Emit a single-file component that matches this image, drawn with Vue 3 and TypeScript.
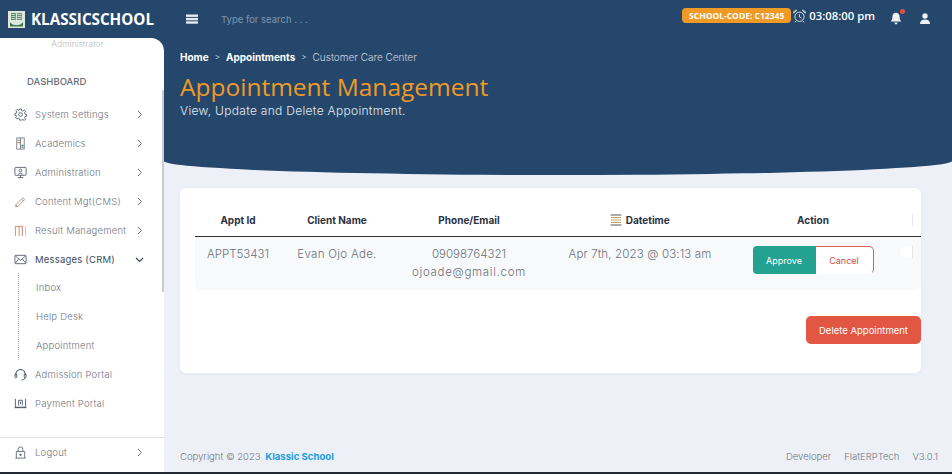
<script setup lang="ts">
interface NavItem { label: string; icon: string; chevron?: 'right' | 'down'; active?: boolean }
const topItems: NavItem[] = [
  { label: 'System Settings', icon: 'gear', chevron: 'right' },
  { label: 'Academics', icon: 'book', chevron: 'right' },
  { label: 'Administration', icon: 'monitor', chevron: 'right' },
  { label: 'Content Mgt(CMS)', icon: 'pen', chevron: 'right' },
  { label: 'Result Management', icon: 'result', chevron: 'right' },
  { label: 'Messages (CRM)', icon: 'mail', chevron: 'down', active: true },
]
const subItems = ['Inbox', 'Help Desk', 'Appointment']
const bottomItems: NavItem[] = [
  { label: 'Admission Portal', icon: 'headset' },
  { label: 'Payment Portal', icon: 'pay' },
]
</script>

<template>
  <div class="page">
    <header class="topbar">
      <div class="brand">
        <svg class="logo" width="17" height="17" viewBox="0 0 17 17">
          <rect width="17" height="17" fill="#dfe8dc" />
          <rect x="3" y="2" width="5" height="7" fill="#5f8a68" />
          <rect x="9" y="2" width="5" height="7" fill="#6c9474" />
          <path d="M3.500 3.500h4M3.500 5.500h4M9.500 3.500h4M9.500 5.500h4M3.500 7.500h4M9.500 7.500h4" stroke="#eef3ec" stroke-width="0.700" />
          <path d="M2 11c2 4 11 4 13 0v4.500H2z" fill="#3c7a4c" />
          <path d="M4 12.500c2 1.500 7 1.500 9 0" stroke="#e8efe5" stroke-width="0.700" fill="none" />
        </svg>
        <span class="brand-name">KLASSICSCHOOL</span>
      </div>
      <svg class="burger" width="12" height="10" viewBox="0 0 12 10">
        <rect y="0.500" width="12" height="2.400" fill="#e8edf3" />
        <rect y="3.900" width="12" height="2.400" fill="#e8edf3" />
        <rect y="7.300" width="12" height="2.400" fill="#e8edf3" />
      </svg>
      <span class="search">Type for search . . .</span>
      <div class="top-right">
        <span class="code">SCHOOL-CODE: C12345</span>
        <svg class="clock" width="13" height="14" viewBox="0 0 13 14" fill="none" stroke="#e8edf3" stroke-width="0.900">
          <circle cx="6.500" cy="7.800" r="4.600" />
          <path d="M6.500 5.300v2.700l1.800 1M.8 4.200a2.300 2.300 0 0 1 3-2.800zM12.200 4.200a2.300 2.300 0 0 0-3-2.800zM3 12l-1 1.400M10 12l1 1.400" />
        </svg>
        <span class="time">03:08:00 pm</span>
        <span class="bell">
          <svg width="12" height="13" viewBox="0 0 12 13">
            <path d="M6 .8c2.500 0 3.600 2 3.600 4.200 0 2.400.6 3.200 1.700 4.500H.7C1.800 8.200 2.400 7.400 2.400 5 2.400 2.800 3.500.8 6 .8z" fill="#eef2f6" />
            <path d="M4.500 10.500h3c0 1-.6 1.800-1.500 1.800s-1.500-.8-1.500-1.800z" fill="#eef2f6" />
          </svg>
          <i class="dot"></i>
        </span>
        <svg class="user" width="10" height="11" viewBox="0 0 10 11">
          <circle cx="5" cy="3" r="2.700" fill="#eef2f6" />
          <path d="M0 11c0-3 2-4.400 5-4.400s5 1.400 5 4.400z" fill="#eef2f6" />
        </svg>
      </div>
    </header>

    <div class="body">
      <aside class="sidebar">
        <div class="role">Administrator</div>
        <div class="dash">DASHBOARD</div>
        <nav class="nav">
          <a v-for="it in topItems" :key="it.label" class="item" :class="{ active: it.active }">
            <svg class="ico" width="13" height="13" viewBox="0 0 14 14" fill="none" stroke="#4a5665" stroke-width="0.900">
              <template v-if="it.icon === 'gear'">
                <circle cx="7" cy="7" r="2" />
                <path d="M6 1h2l.3 1.700 1.300.6 1.500-1 1.300 1.500-1 1.400.5 1.300 1.600.4v2l-1.600.4-.5 1.300 1 1.400-1.300 1.400-1.500-1-1.300.6L8 13H6l-.3-1.600-1.300-.6-1.500 1-1.300-1.400 1-1.400-.5-1.300L1 7.900v-2l1.600-.4.5-1.300-1-1.400 1.300-1.500 1.500 1 1.300-.6z" />
              </template>
              <template v-else-if="it.icon === 'book'">
                <rect x="3" y="1" width="8" height="12" stroke="#6b7280" />
                <path d="M7 1v12" stroke="#6b7280" />
                <path d="M3.800 3.500h2.500M3.800 6h2.500" stroke="#c4813a" stroke-width="1.300" />
                <path d="M8 9h2.300M8 11h2.300" stroke="#3f8f6a" stroke-width="1.300" />
              </template>
              <template v-else-if="it.icon === 'monitor'">
                <rect x="1" y="1.500" width="12" height="8.500" rx="0.600" />
                <circle cx="7" cy="4.800" r="1.500" />
                <path d="M4.500 9c.4-1.500 4.600-1.500 5 0M4 12.500h6M7 10v2.500" />
              </template>
              <template v-else-if="it.icon === 'pen'">
                <path d="M2 10.500 9 3.500a1.500 1.500 0 0 1 2 2L4.200 12.300 1.800 12.700z" stroke="#8a8f98" />
                <path d="M8 4.500l2 2" stroke="#c4813a" />
                <path d="M2 10.500l1.800 1.800" stroke="#c4813a" />
              </template>
              <template v-else-if="it.icon === 'result'">
                <path d="M1.500 13V2.500h8" stroke="#c9814f" />
                <path d="M5.500 13V2.500" stroke="#c9814f" />
                <path d="M9 13V2.500" stroke="#c46a5a" />
                <path d="M12.500 13V2.500" stroke="#a9bdd6" />
              </template>
              <template v-else-if="it.icon === 'mail'">
                <rect x="1" y="2.500" width="12" height="9" rx="0.800" />
                <path d="M1.300 3 7 7.800 12.700 3M1.300 11 5 6.500M12.700 11 9 6.500" />
              </template>
            </svg>
            <span class="label">{{ it.label }}</span>
            <svg v-if="it.chevron === 'right'" class="chev" width="6" height="9" viewBox="0 0 6 9" fill="none" stroke="#66707c" stroke-width="1"><path d="M1 1l3.500 3.500L1 8" /></svg>
            <svg v-else class="chev down" width="9" height="6" viewBox="0 0 9 6" fill="none" stroke="#3a4553" stroke-width="1.100"><path d="M1 1l3.500 3.500L8 1" /></svg>
          </a>
          <div class="subs">
            <a v-for="s in subItems" :key="s" class="sub">{{ s }}</a>
          </div>
          <a v-for="it in bottomItems" :key="it.label" class="item">
            <svg class="ico" width="13" height="13" viewBox="0 0 14 14" fill="none" stroke="#3d4a5a" stroke-width="0.900">
              <template v-if="it.icon === 'headset'">
                <path d="M2 8V6.500a5 5 0 0 1 10 0V8" stroke-width="1.100" />
                <rect x="1" y="6.500" width="2" height="4" rx="0.800" />
                <rect x="11" y="6.500" width="2" height="4" rx="0.800" />
                <path d="M12 10.500c0 1.800-2 2.300-4 2.300" />
              </template>
              <template v-else>
                <path d="M1.500 2v9h11V2M.5 11.500h13" />
                <path d="M5 9V3.500h4V9" />
                <path d="M7 5v2.500" />
              </template>
            </svg>
            <span class="label">{{ it.label }}</span>
          </a>
        </nav>
        <div class="logout">
          <svg class="ico" width="13" height="13" viewBox="0 0 14 14" fill="none" stroke="#555f6c" stroke-width="0.900">
            <path d="M1.500 13h11M2.500 13V6h9v7" />
            <path d="M4.500 6V3.500a2.500 2.500 0 0 1 5 0V6" />
            <circle cx="7" cy="9.500" r="0.800" fill="#555f6c" />
          </svg>
          <span class="label">Logout</span>
          <svg class="chev" width="6" height="9" viewBox="0 0 6 9" fill="none" stroke="#66707c" stroke-width="1"><path d="M1 1l3.500 3.500L1 8" /></svg>
        </div>
        <div class="scroll"></div>
      </aside>

      <main class="main">
        <section class="hero">
          <div class="crumbs">
            <b>Home</b><span class="sep">&gt;</span><b>Appointments</b><span class="sep">&gt;</span><span class="cur">Customer Care Center</span>
          </div>
          <h1>Appointment Management</h1>
          <p>View, Update and Delete Appointment.</p>
        </section>

        <section class="card">
          <div class="table">
            <div class="row head">
              <div class="c id">Appt Id</div>
              <div class="c name">Client Name</div>
              <div class="c phone">Phone/Email</div>
              <div class="c date">
                <svg width="12" height="12" viewBox="0 0 12 12" fill="none" stroke="#444" stroke-width="0.900"><path d="M.5 1h11M.5 11h11" /><path d="M1 3.500h10M1 6h10M1 8.500h10" stroke="#b89a55" /></svg>
                Datetime
              </div>
              <div class="c action">Action</div>
              <div class="c tick"><i></i></div>
            </div>
            <div class="row data">
              <div class="c id">APPT53431</div>
              <div class="c name">Evan Ojo Ade.</div>
              <div class="c phone">09098764321<br /><span class="mail">ojoade@gmail.com</span></div>
              <div class="c date">Apr 7th, 2023 @ 03:13 am</div>
              <div class="c action">
                <div class="btns">
                  <button class="approve">Approve</button>
                  <button class="cancel">Cancel</button>
                </div>
              </div>
              <div class="c tick"><i></i></div>
            </div>
          </div>
          <div class="card-foot">
            <button class="delete">Delete Appointment</button>
          </div>
        </section>

        <footer class="foot">
          <div>Copyright © 2023 <a class="kl">Klassic School</a></div>
          <div class="foot-r"><span>Developer</span><span>FlatERPTech</span><span>V3.0.1</span></div>
        </footer>
      </main>
    </div>
    <div class="baseline"></div>
  </div>
</template>

<style>
html, body { margin: 0; background: #edf1f7; }
</style>

<style scoped>
.page { width: 952px; height: 474px; display: flex; flex-direction: column; overflow: hidden; font-family: Inter, "Noto Sans", sans-serif; background: #edf1f7; }
.topbar { height: 38px; flex: none; background: #25476b; display: flex; align-items: center; padding: 0 0 0 8px; box-sizing: border-box; }
.brand { width: 178px; display: flex; align-items: center; gap: 6px; }
.logo { flex: none; }
.brand-name { font-family: "Open Sans", sans-serif; font-weight: 700; font-size: 15.200px; color: #fff; white-space: nowrap; }
.burger { flex: none; }
.search { margin-left: 23px; font-size: 9.500px; color: #8296b0; white-space: nowrap; }
.top-right { margin-left: auto; display: flex; align-items: center; padding-right: 22px; margin-top: -7px; }
.code { background: #f09a26; color: #fff; font-family: "Open Sans", sans-serif; font-weight: 700; font-size: 8.500px; padding: 0 7px; height: 15px; line-height: 15px; border-radius: 4px; white-space: nowrap; }
.clock { margin-left: 2px; }
.time { margin-left: 3px; color: #fff; font-family: "Open Sans", sans-serif; font-weight: 600; font-size: 11.300px; white-space: nowrap; }
.bell { position: relative; display: flex; margin-left: 15px; margin-top: 6px; }
.dot { position: absolute; top: -3px; right: -3px; width: 5px; height: 5px; border-radius: 50%; background: #e04f43; }
.user { margin-left: 18px; margin-top: 6px; }

.body { flex: 1; min-height: 0; display: flex; background: linear-gradient(#25476b 30px, #edf1f7 30px); }
.sidebar { position: relative; width: 164px; flex: none; background: #fff; border-top-right-radius: 13px; display: flex; flex-direction: column; overflow: hidden; }
.role { font-size: 8.500px; line-height: 12px; color: #b9bec5; font-weight: 300; text-align: center; margin-left: -9px; }
.dash { margin: 26px 0 0 27px; font-size: 9.500px; line-height: 12px; color: #666d77; font-weight: 500; }
.nav { margin-top: 12px; display: flex; flex-direction: column; }
.item { height: 29px; display: flex; align-items: center; padding-left: 14px; color: #71777f; font-weight: 300; font-size: 9.500px; box-sizing: border-box; }
.item.active { color: #3c4c62; font-weight: 400; }
.ico { flex: none; }
.label { margin-left: 8px; white-space: nowrap; letter-spacing: 0.200px; }
.chev { position: absolute; left: 137px; }
.chev.down { left: 135px; }
.subs { margin: -1px 0 0 18px; border-left: 1px dotted #a9afb8; display: flex; flex-direction: column; }
.sub { height: 29px; line-height: 29px; padding-left: 17px; font-size: 9.500px; font-weight: 300; color: #71777f; letter-spacing: 0.200px; }
.logout { margin-top: auto; height: 29px; padding: 0 0 5px 14px; border-top: 1px solid #dfe2e6; display: flex; align-items: center; color: #71777f; font-weight: 300; font-size: 9.500px; }
.scroll { position: absolute; right: 0; top: 52px; width: 2px; height: 202px; background: #c9ccd1; }

.main { flex: 1; min-width: 0; display: flex; flex-direction: column; }
.hero { height: 137px; flex: none; box-sizing: border-box; background: #25476b; border-radius: 0 0 50% 50% / 0 0 14px 14px; padding: 12px 0 0 16px; }
.crumbs { display: flex; align-items: center; font-size: 10px; line-height: 14px; color: #fff; white-space: nowrap; }
.crumbs b { font-weight: 700; }
.sep { margin: 0 6px; color: #c5d0dd; font-size: 8px; }
.cur { color: #d3dbe5; font-weight: 300; }
h1 { margin: 8px 0 0; font-family: "Open Sans", sans-serif; font-weight: 400; font-size: 24.500px; line-height: 30px; color: #f09a26; white-space: nowrap; }
.hero p { margin: 2px 0 0; font-size: 12px; line-height: 14px; color: #e4e9f0; letter-spacing: 0.300px; font-weight: 300; white-space: nowrap; }

.card { margin: 13px 31px 0 16px; background: #fff; border-radius: 6px; height: 185px; flex: none; padding: 16px 0 0 15px; box-sizing: border-box; box-shadow: 0 1px 4px rgba(30,50,80,.05); display: flex; flex-direction: column; }
.table { width: 726px; }
.row { display: flex; }
.head { height: 32px; align-items: center; border-bottom: 1px solid #333; font-size: 10px; font-weight: 700; color: #2c3240; }
.data { height: 53px; background: #f8f9fb; border-radius: 0 0 5px 5px; font-size: 11.500px; line-height: 17.500px; font-weight: 300; color: #6b7179; padding-top: 9px; box-sizing: border-box; }
.c { text-align: center; white-space: nowrap; box-sizing: border-box; }
.id { width: 86px; }
.name { width: 112px; }
.data .name { letter-spacing: 0.300px; }
.phone { width: 152px; }
.mail { letter-spacing: 0.700px; }
.date { width: 190px; }
.data .date { letter-spacing: 0.150px; }
.date svg { vertical-align: -2px; margin-right: 1px; }
.action { width: 156px; }
.tick { flex: 1; display: flex; justify-content: center; }
.tick i { display: block; width: 12px; height: 12px; background: #fff; border-radius: 50% 0 0 50%; border-right: 1px solid #e4e6e9; }
.btns { display: inline-flex; height: 28px; }
button { font-family: inherit; border: none; padding: 0; font-size: 9px; font-weight: 400; cursor: pointer; }
.approve { width: 63px; background: #23a291; color: #fff; border-radius: 4px 0 0 4px; }
.cancel { width: 58px; background: #fff; color: #cc4d43; border: 1px solid #d8605a; border-left: none; border-bottom-color: transparent; border-radius: 0 5px 5px 0; }
.card-foot { margin-top: 26px; width: 726px; display: flex; justify-content: flex-end; }
.delete { width: 115px; height: 28px; background: #e25644; color: #fff; border-radius: 5px; font-size: 9.500px; }

.foot { margin-top: auto; height: 36px; padding: 5px 14px 0 16px; box-sizing: border-box; display: flex; justify-content: space-between; align-items: center; font-size: 9.500px; font-weight: 300; color: #6f757e; white-space: nowrap; }
.kl { margin-left: 2px; color: #1f9bdc; font-weight: 700; font-size: 9.600px; }
.foot-r { display: flex; gap: 13px; }
.baseline { height: 2px; flex: none; background: #232a33; }
</style>
